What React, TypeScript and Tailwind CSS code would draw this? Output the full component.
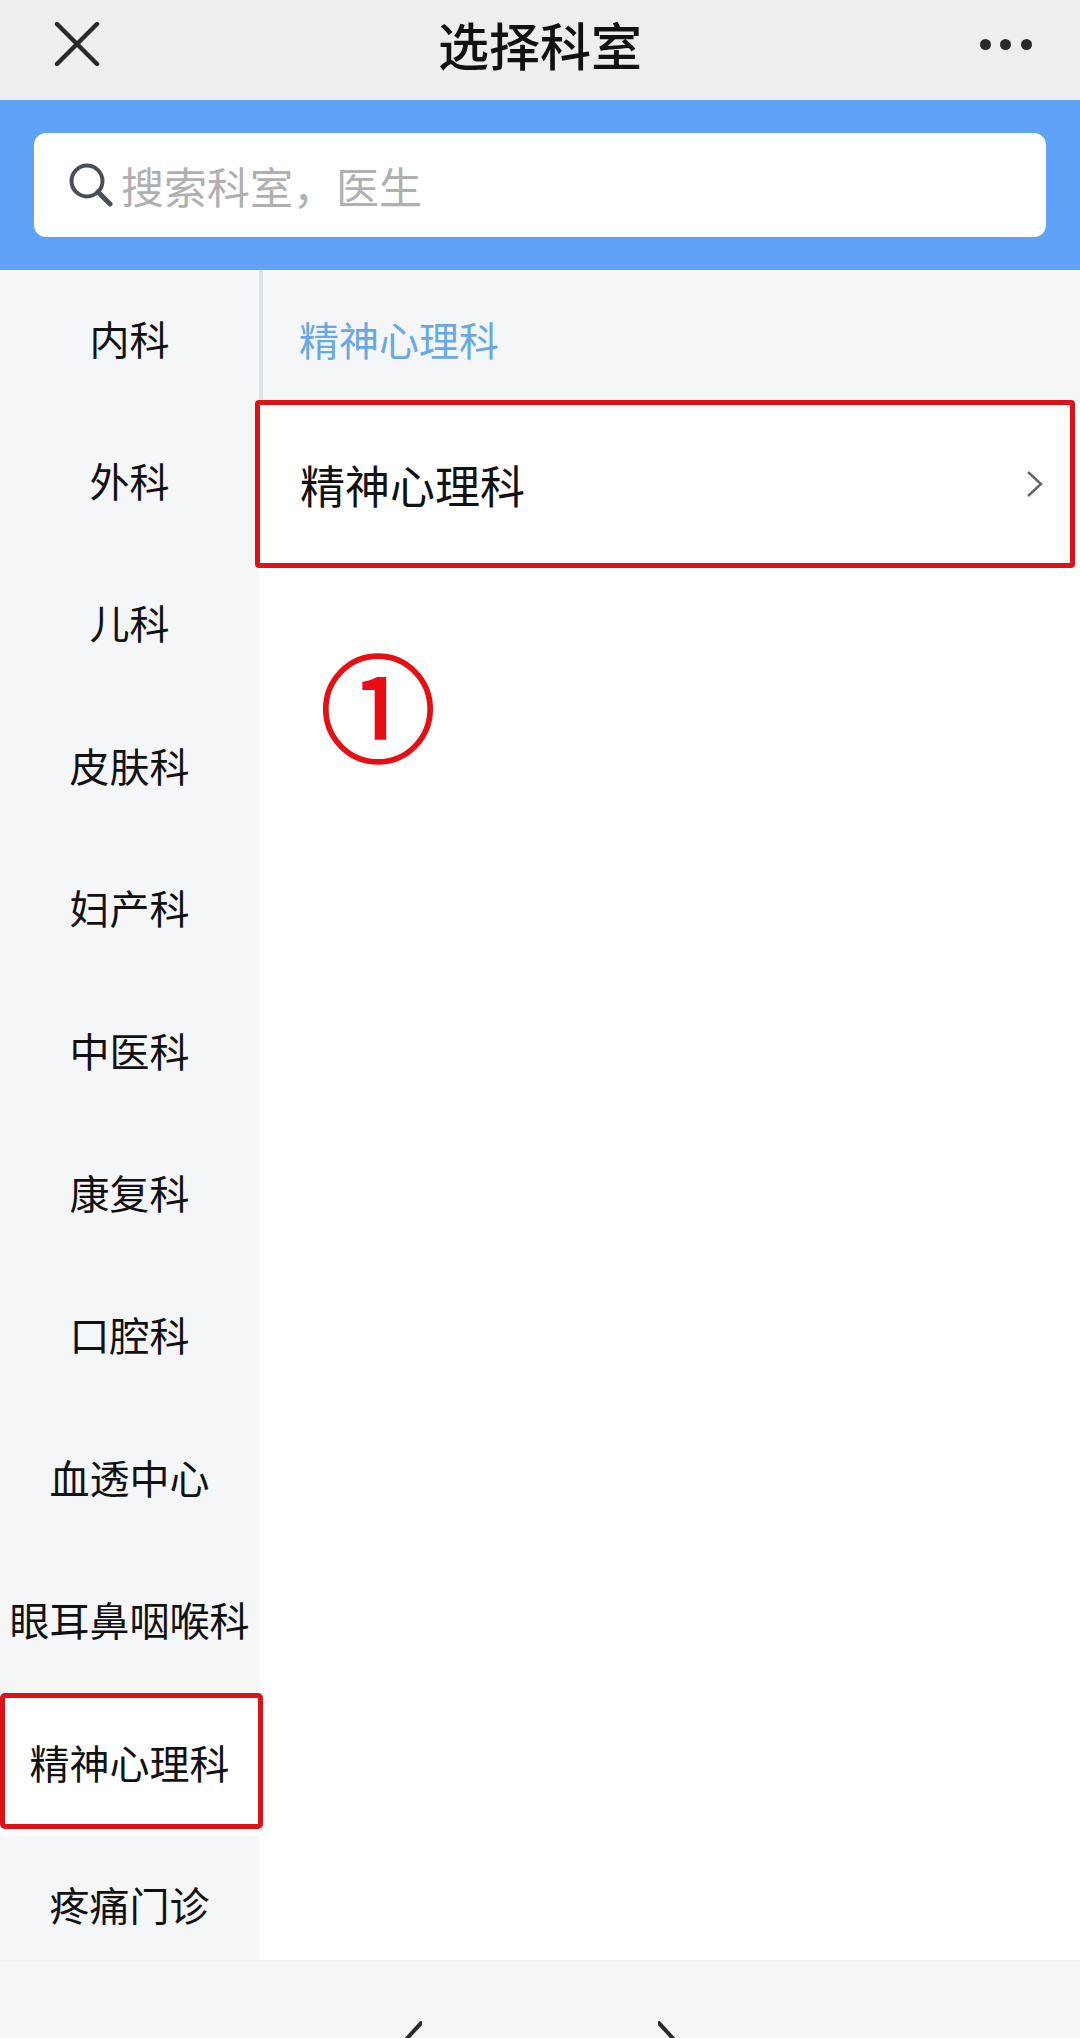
const departments = [
  "内科",
  "外科",
  "儿科",
  "皮肤科",
  "妇产科",
  "中医科",
  "康复科",
  "口腔科",
  "血透中心",
  "眼耳鼻咽喉科",
  "精神心理科",
  "疼痛门诊",
];

const selected = "精神心理科";

export default function App() {
  return (
    <div className="relative flex h-[2038px] w-[1080px] flex-col overflow-hidden bg-white font-['Noto_Sans_CJK_SC',sans-serif] text-[#111]">
      {/* 顶部导航 */}
      <div className="flex h-[100px] shrink-0 items-center justify-between bg-[#eeeeee] pb-[12px] pl-[54px] pr-[48px]">
        <svg width="46" height="44" viewBox="0 0 46 44" fill="none" stroke="#2a2a2a" strokeWidth="4.5" strokeLinecap="round">
          <path d="M3 2 L43 42" />
          <path d="M43 2 L3 42" />
        </svg>
        <div className="text-[51px] font-medium leading-none">选择科室</div>
        <div className="flex w-[52px] justify-between">
          <span className="h-[11px] w-[11px] rounded-full bg-[#2a2a2a]" />
          <span className="h-[11px] w-[11px] rounded-full bg-[#2a2a2a]" />
          <span className="h-[11px] w-[11px] rounded-full bg-[#2a2a2a]" />
        </div>
      </div>

      {/* 搜索 */}
      <div className="flex h-[170px] shrink-0 items-center bg-[#60a2f8] px-[34px]">
        <div className="flex h-[104px] w-full items-center rounded-[12px] bg-white pl-[35px]">
          <svg width="44" height="44" viewBox="0 0 44 44" fill="none" stroke="#4a4f57" strokeWidth="4" strokeLinecap="round">
            <circle cx="18" cy="18" r="15.5" />
            <path d="M29 29 L41 41" strokeWidth="5" />
          </svg>
          <span className="ml-[8px] text-[43px] leading-none text-[#b0b0b0]">搜索科室，医生</span>
        </div>
      </div>

      <div className="flex min-h-0 flex-1">
        {/* 科室列表 */}
        <div className="w-[259px] shrink-0 overflow-hidden bg-[#f4f6f8]">
          {departments.map((name) => (
            <div
              key={name}
              className={`flex h-[142.4px] items-center justify-center whitespace-nowrap pb-[7px] text-[40px] leading-none ${
                name === selected ? "bg-white" : ""
              }`}
            >
              {name}
            </div>
          ))}
        </div>

        <div className="flex flex-1 flex-col">
          <div className="flex h-[131px] shrink-0 items-center border-l-[4px] border-[#dde1e8] bg-[#f4f6f8] pl-[36px] pt-[6px] text-[40px] leading-none text-[#68a9e4]">
            精神心理科
          </div>
          <div className="flex h-[166px] shrink-0 items-center justify-between pl-[41px] pr-[36px] text-[45px] leading-none">
            <span>精神心理科</span>
            <svg width="18" height="28" viewBox="0 0 18 28" fill="none" stroke="#666" strokeWidth="2.5">
              <path d="M2 2 L15 14 L2 26" />
            </svg>
          </div>
        </div>
      </div>

      {/* 底部工具栏 */}
      <div className="flex h-[78px] shrink-0 justify-center gap-[236px] border-t-2 border-[#efefef] bg-[#f6f6f6] pt-[58px]">
        <svg width="30" height="20" viewBox="0 0 30 20" fill="none" stroke="#2a2a2a" strokeWidth="4" strokeLinecap="round">
          <path d="M29 3 L10 24" />
        </svg>
        <svg width="30" height="20" viewBox="0 0 30 20" fill="none" stroke="#2a2a2a" strokeWidth="4" strokeLinecap="round">
          <path d="M1 3 L20 24" />
        </svg>
      </div>

      {/* 红色标注 */}
      <div className="absolute left-[255px] top-[400px] h-[168px] w-[820px] rounded-[4px] border-[5px] border-[#dc1216]" />
      <div className="absolute left-0 top-[1693px] h-[136px] w-[263px] rounded-[5px] border-[5px] border-[#dc1216]" />
      <div className="absolute left-[320px] top-[634px] text-[116px] font-normal leading-[136px] text-[#e60f14] [-webkit-text-stroke:2px_#e60f14]">①</div>
    </div>
  );
}
